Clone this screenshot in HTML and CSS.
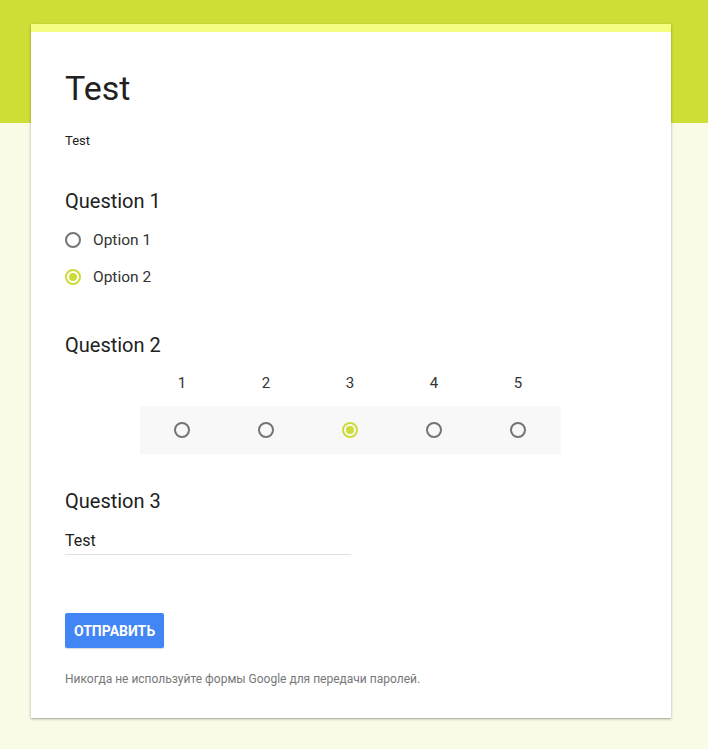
FILE: index.html
```html
<!DOCTYPE html>
<html lang="ru">
<head>
<meta charset="utf-8">
<link rel="stylesheet" href="styles.css">
</head>
<body>
<div class="header-bg"></div>
<div class="page">
  <div class="card">
    <div class="band"></div>
    <div class="content">
      <h1 class="title">Test</h1>
      <div class="desc">Test</div>

      <div class="question q1">
        <div class="q-title">Question 1</div>
        <div class="options">
          <div class="option"><span class="radio"></span><span class="opt-label">Option 1</span></div>
          <div class="option"><span class="radio checked"></span><span class="opt-label">Option 2</span></div>
        </div>
      </div>

      <div class="question q2">
        <div class="q-title">Question 2</div>
        <div class="scale">
          <div class="scale-labels">
            <span>1</span><span>2</span><span>3</span><span>4</span><span>5</span>
          </div>
          <div class="scale-row">
            <span class="cell"><span class="radio"></span></span>
            <span class="cell"><span class="radio"></span></span>
            <span class="cell"><span class="radio checked"></span></span>
            <span class="cell"><span class="radio"></span></span>
            <span class="cell"><span class="radio"></span></span>
          </div>
        </div>
      </div>

      <div class="question q3">
        <div class="q-title">Question 3</div>
        <div class="text-input">Test</div>
      </div>

      <button class="submit">ОТПРАВИТЬ</button>
      <div class="footer-note">Никогда не используйте формы Google для передачи паролей.</div>
    </div>
  </div>
</div>
</body>
</html>
```
FILE: styles.css
```css
html, body {
  margin: 0;
  padding: 0;
}
body {
  background: #f9fbe7;
  font-family: Roboto, "Liberation Sans", Arial, sans-serif;
  color: #212121;
  position: relative;
  min-height: 749px;
}
.header-bg {
  height: 123px;
  background: #cfdd37;
}
.page {
  position: absolute;
  top: 24px;
  left: 0;
  right: 0;
  display: flex;
  justify-content: center;
}
.card {
  width: 640px;
  background: #fff;
  box-shadow: 0 1px 3px rgba(0,0,0,0.25), 0 1px 1px rgba(0,0,0,0.12);
  margin-right: 6px;
}
.band {
  height: 8px;
  background: #f4ff81;
}
.content {
  padding: 36px 34px 31px 34px;
}
.title {
  margin: 0;
  font-size: 34px;
  font-weight: 400;
  line-height: 40px;
  color: #212121;
}
.desc {
  margin-top: 23px;
  font-size: 13px;
  line-height: 20px;
  color: #212121;
}
.q-title {
  font-size: 20px;
  line-height: 24px;
  color: #212121;
}
.q1 {
  margin-top: 38px;
}
.options {
  margin-top: 15px;
}
.option {
  display: flex;
  align-items: center;
  height: 24px;
  margin-bottom: 13px;
}
.opt-label {
  margin-left: 12px;
  font-size: 15.5px;
  color: #333;
}
.radio {
  width: 12px;
  height: 12px;
  border: 2px solid #757575;
  border-radius: 50%;
  display: inline-block;
  box-sizing: content-box;
  position: relative;
  flex: none;
}
.radio.checked {
  border-color: #cddc39;
}
.radio.checked::after {
  content: "";
  position: absolute;
  left: 2px;
  top: 2px;
  width: 8px;
  height: 8px;
  border-radius: 50%;
  background: #cddc39;
}
.q2 {
  margin-top: 44px;
}
.scale {
  margin-left: 75px;
  width: 421px;
  margin-top: 16px;
}
.scale-labels {
  display: grid;
  grid-template-columns: repeat(5, 84px);
  font-size: 15px;
  line-height: 20px;
  color: #333;
  text-align: center;
}
.scale-row {
  margin-top: 13px;
  height: 48px;
  background: #f8f8f8;
  display: grid;
  grid-template-columns: repeat(5, 84px);
  align-items: center;
}
.cell {
  display: flex;
  justify-content: center;
}
.q3 {
  margin-top: 35px;
}
.text-input {
  margin-top: 18px;
  width: 286px;
  font-size: 16px;
  line-height: 20px;
  padding-bottom: 3px;
  border-bottom: 1px solid #e0e0e0;
  color: #212121;
}
.submit {
  display: block;
  margin-top: 58px;
  height: 35px;
  padding: 0 9px;
  background: #4285f4;
  color: #fff;
  border: none;
  border-radius: 2px;
  font-family: Roboto, "Liberation Sans", Arial, sans-serif;
  font-size: 14px;
  font-weight: 700;
  box-shadow: 0 1px 1px rgba(0,0,0,0.15);
}
.footer-note {
  margin-top: 23px;
  font-size: 12px;
  line-height: 16px;
  color: #777;
}
```
